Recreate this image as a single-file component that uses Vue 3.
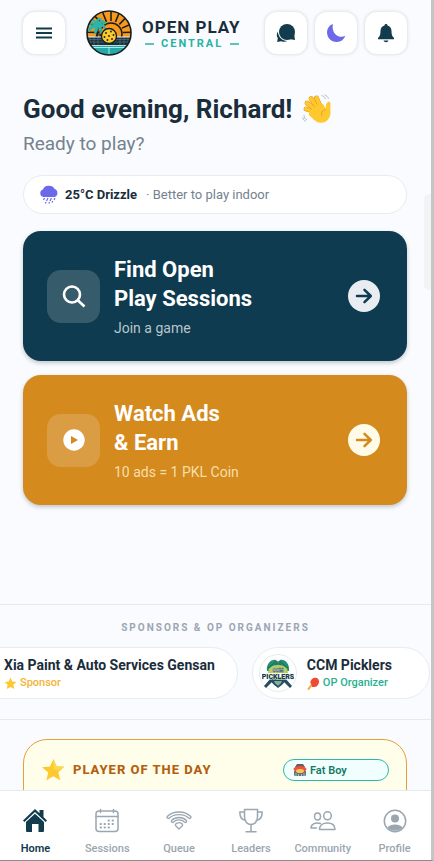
<script setup>
import { ref } from 'vue'

const rays = [-90, -68, -46, -24, -2, -112, -134, -156, -178]

const fingers = ['M17 19L4 15', 'M17 18L5 9', 'M18 17L9 4.5', 'M20 16L14.5 4']

const cards = [
  { id: 'find', lines: ['Find Open', 'Play Sessions'], note: 'Join a game' },
  { id: 'ads', lines: ['Watch Ads', '& Earn'], note: '10 ads = 1 PKL Coin' },
]

const tabs = ['Home', 'Sessions', 'Queue', 'Leaders', 'Community', 'Profile']
const active = ref('Home')
</script>

<template>
  <div class="app">
    <main class="content">
      <header class="header">
        <button class="icon-btn" aria-label="Menu">
          <svg width="18" height="14" viewBox="0 0 18 14" fill="none" stroke="#123b4e" stroke-width="2.200">
            <path d="M1 2.500h16M1 7h16M1 11.500h16" />
          </svg>
        </button>
        <div class="brand">
          <svg class="brand-logo" width="46" height="46" viewBox="0 0 46 46">
            <defs>
              <clipPath id="disc"><circle cx="23" cy="23" r="22" /></clipPath>
            </defs>
            <g clip-path="url(#disc)">
              <rect width="46" height="46" fill="#f8991d" />
              <g stroke="#171d20" stroke-width="1.5">
                <line
                  v-for="r in rays"
                  :key="r"
                  x1="37"
                  y1="23"
                  x2="54"
                  y2="23"
                  :transform="`rotate(${r} 25 23)`"
                />
              </g>
              <circle cx="25" cy="24" r="11" fill="#f8991d" stroke="#171d20" stroke-width="1.5" />
              <path d="M10 16c1 4 1 8-1 12h3c1-4 1-8 0-12z" fill="#171d20" />
              <path
                d="M11 16C8 11 4 12 2 16c3-2 5-2 6-1-4 0-6 3-5 7 2-3 4-4 7-5-2 2-2 5-1 7 2-2 3-4 3-7 2 2 3 4 2 7 3-3 2-6 0-8 3 0 4 1 5 4 1-4-1-6-4-6 1-1 3-1 5 0-1-4-5-5-8-1 0-3 2-4 4-4-3-2-6 0-6 3-1-2-3-3-5-2 3 1 4 3 6 6z"
                fill="#2cb5ab"
                stroke="#2cb5ab"
                stroke-width="0.7"
              />
              <rect y="27" width="46" height="8" fill="#183241" />
              <path d="M0 29.5h46M0 32h46M4 27v8M8 27v8M12 27v8M34 27v8M38 27v8M42 27v8" stroke="#66808a" stroke-width="0.5" />
              <path d="M0 27h46" stroke="#e6edf0" stroke-width="1" />
              <rect y="35" width="46" height="11" fill="#25a9a7" />
              <path d="M0 35.5h46M23 37v9M8 37l-4 7M38 37l4 7M6 37.5h34" stroke="#d8f2ef" stroke-width="0.8" fill="none" />
            </g>
            <circle cx="23" cy="26" r="7.5" fill="#fcc92d" stroke="#171d20" stroke-width="1.3" />
            <g fill="#171d20">
              <circle cx="23" cy="26" r="0.9" /><circle cx="20" cy="23" r="0.9" /><circle cx="25" cy="21.5" r="0.9" />
              <circle cx="27.5" cy="25" r="0.9" /><circle cx="26" cy="29" r="0.9" /><circle cx="21.5" cy="30" r="0.9" />
              <circle cx="18.5" cy="27" r="0.9" />
            </g>
            <circle cx="23" cy="23" r="22" fill="none" stroke="#171d20" stroke-width="1.6" />
          </svg>
          <div class="brand-text">
            <span class="brand-name">OPEN PLAY</span>
            <span class="brand-sub"><i class="dash"></i><span>CENTRAL</span><i class="dash"></i></span>
          </div>
        </div>
        <div class="actions">
          <button class="icon-btn" aria-label="Messages">
            <svg width="20" height="20" viewBox="0 0 20 20" fill="#123b4e">
              <path d="M11 1a8 8 0 1 1 0 16 8 8 0 0 1 0-16z" />
              <path d="M13 16l6 1-1-7z" />
              <path d="M1.800 8.500C.3 11.200.6 13.500 1.800 15L1.200 19l4-.8c2 .9 4.500.8 6-.2-5 0-9-4-9.400-9.500z" />
            </svg>
          </button>
          <button class="icon-btn" aria-label="Dark mode">
            <svg width="20" height="20" viewBox="0 0 20 20" fill="#6b68ea">
              <path d="M7 1C2.500 2.500.6 6.500 1.200 11c.8 5 5 8.200 9.800 8 4-.2 7-2.500 8.300-6.200-3 1.400-7 1.200-9.700-1.400C6.800 8.700 6 4.500 7 1z" />
            </svg>
          </button>
          <button class="icon-btn" aria-label="Notifications">
            <svg width="18" height="20" viewBox="0 0 18 20" fill="#123b4e">
              <path d="M9 1c.9 0 1.500.6 1.500 1.400C13 3 14.500 5 14.500 8c0 4 .8 5.500 2.500 7v1.200H1V15c1.700-1.500 2.500-3 2.500-7 0-3 1.500-5 4-5.600C7.500 1.600 8.100 1 9 1z" />
              <path d="M6.500 17.500h5c-.3 1-1.300 1.700-2.500 1.700s-2.200-.7-2.500-1.700z" />
            </svg>
          </button>
        </div>
      </header>

      <section class="home">
        <h1 class="greeting">
          Good evening, Richard!
          <svg width="30" height="30" viewBox="0 0 30 30">
            <g v-for="f in fingers" :key="f" fill="none" stroke-linecap="round">
              <path :d="f" stroke="#e89a1c" stroke-width="4.800" />
              <path :d="f" stroke="#fdc92e" stroke-width="3.800" />
            </g>
            <path
              d="M7 18l8-7 6-1 3 5c-.5-3 0-6 2-7 1.500-.5 2.800.5 2.500 2-.8 4 1 8-.5 12-1.500 5-6 7.500-11 6.500-3-.6-5.500-3-10-7.500z"
              fill="#fdc92e"
            />
            <path d="M20 22c-1.500-3 .5-5.500 4-6.500" stroke="#e89a1c" fill="none" stroke-width="0.9" />
            <path d="M19.500 1.500c2 .5 3 1.500 4 3.500M22.500 .8c2 .7 3.300 2 4 4M2 21c0 2 1 4 3 5M.8 23.500c.5 2 1.500 3.300 3 4" stroke="#a9b4bc" fill="none" stroke-width="0.9" />
          </svg>
        </h1>
        <p class="ready">Ready to play?</p>

        <div class="weather">
          <svg width="20" height="20" viewBox="0 0 20 20">
            <path d="M4.500 12A3.800 3.800 0 0 1 4 4.600 6 5 0 0 1 15.500 4 4.200 4.200 0 0 1 15.500 12z" fill="#6b68ea" />
            <path d="M5.500 13l-1 2M9 13l-1.500 3M12.500 13l-1.500 3M16 13l-1 2M7 17l-.7 1.500M10.500 17l-.7 1.500M13.700 16l-.7 1.500" stroke="#6b68ea" stroke-width="1.200" />
          </svg>
          <strong>25°C Drizzle</strong>
          <span>· Better to play indoor</span>
        </div>

        <button v-for="card in cards" :key="card.id" class="card" :class="card.id">
          <span class="card-icon">
            <svg v-if="card.id === 'find'" width="24" height="24" viewBox="0 0 24 24" fill="none" stroke="#fff" stroke-width="2.600">
              <circle cx="10" cy="10.500" r="8" />
              <path d="M16 16.500l6.500 6" />
            </svg>
            <svg v-else width="24" height="24" viewBox="0 0 24 24">
              <circle cx="12" cy="12" r="10.700" fill="#fff" />
              <path d="M9 8v8l7-4z" fill="#d48a1d" />
            </svg>
          </span>
          <span class="card-text">
            <span class="card-title">{{ card.lines[0] }}<br />{{ card.lines[1] }}</span>
            <span class="card-note">{{ card.note }}</span>
          </span>
          <span class="card-arrow">
            <svg width="18" height="18" viewBox="0 0 18 18" fill="none" stroke="currentColor" stroke-width="2.500" stroke-linecap="round" stroke-linejoin="round">
              <path d="M2 9h13.500M9.500 2.800L15.800 9l-6.300 6.200" />
            </svg>
          </span>
        </button>
      </section>

      <section class="sponsors">
        <h2 class="sponsors-title">SPONSORS &amp; OP ORGANIZERS</h2>
        <div class="track">
          <article class="pill">
            <span class="avatar"></span>
            <div>
              <p class="pill-name">Xia Paint &amp; Auto Services Gensan</p>
              <p class="pill-role sponsor">
                <svg width="13" height="13" viewBox="0 0 24 24">
                  <path d="M12 1l3.300 7.200 7.700.8-5.700 5.300 1.600 7.900L12 18.300l-6.900 3.900 1.600-7.900L1 9l7.700-.8z" fill="#fdc92e" />
                </svg>
                Sponsor
              </p>
            </div>
          </article>
          <article class="pill">
            <span class="avatar">
              <svg width="32" height="32" viewBox="0 0 32 32">
                <path d="M5 14C4 7 9 2 14 3l2 3 2-3c5-1 10 4 9 11z" fill="#228f70" />
                <path d="M6 11l9-7M9 13l8-9M26 11l-9-7M23 13l-8-9" stroke="#194d54" stroke-width="0.6" />
                <path d="M6 16c0-5 4-8 10-8s10 3 10 8z" fill="#b9cd65" />
                <path d="M2 29l7-8 3 2-8 8zM30 29l-7-8-3 2 8 8z" fill="#244b61" />
                <path d="M8 20h16c0 5-4 8-8 11-4-3-8-6-8-11z" fill="#244b61" />
                <path d="M12 24h8c-1 3-2 3-4 5-2-2-3-2-4-5z" fill="#7cb28c" />
                <text x="16" y="15" class="ccm-top">CCM</text>
                <text x="16" y="22" class="ccm-main">PICKLERS</text>
              </svg>
            </span>
            <div>
              <p class="pill-name">CCM Picklers</p>
              <p class="pill-role organizer">
                <svg width="13" height="13" viewBox="0 0 24 24">
                  <path d="M3 22l6-8" stroke="#f6b04b" stroke-width="4" stroke-linecap="round" />
                  <path d="M6 10C7 3 13 0 18 2s6 9 1 14c-3 3-8 3-10 2 0-3-1-5-3-8z" fill="#ee4b32" />
                </svg>
                OP Organizer
              </p>
            </div>
          </article>
        </div>
      </section>

      <section class="player">
        <svg width="24" height="24" viewBox="0 0 24 24">
          <path d="M12.500 1l3 7.300 7.800.5-5.900 5.400 1.800 8-6.900-4-6.900 4 1.800-7.700L1 9.300l8-.8z" fill="#fdc92e" />
          <path d="M12.500 1l3 7.300 7.800.5-6 3.700-4.800-1.500z" fill="#fdd84d" />
        </svg>
        <h2 class="player-title">PLAYER OF THE DAY</h2>
        <span class="badge">
          <svg width="14" height="14" viewBox="0 0 14 14">
            <path d="M2 4l2-3h6l2 3z" fill="#596269" />
            <rect x="1" y="7" width="12" height="6" rx="1.500" fill="#687078" />
            <ellipse cx="7" cy="6" rx="6.500" ry="3" fill="#f0503c" />
            <ellipse cx="7" cy="8" rx="4" ry="2" fill="#f2ca55" />
            <path d="M3 10v3M5.500 11v2.500M8.500 11v2.500M11 10v3" stroke="#d6dbdd" stroke-width="0.700" />
          </svg>
          Fat Boy
        </span>
      </section>
    </main>

    <nav class="tabbar">
      <button v-for="tab in tabs" :key="tab" class="tab" :class="{ active: tab === active }" @click="active = tab">
        <svg width="26" height="26" viewBox="0 0 26 26" fill="none" stroke="currentColor" stroke-width="1.500" stroke-linejoin="round" stroke-linecap="round">
          <g v-if="tab === 'Home'" stroke="none" fill="currentColor">
            <path d="M13 1L1 12.500l1.400 1.400L13 4l10.600 9.900 1.400-1.400-3.500-3.400V2h-4v3.300z" />
            <path d="M4 14l9-8.200 9 8.200v8.500c0 1-.5 1.500-1.500 1.500h-4v-8h-6.500v8H5.500C4.500 24 4 23.500 4 22.500z" />
          </g>
          <g v-else-if="tab === 'Sessions'">
            <rect x="2" y="3" width="22" height="20.500" rx="3" />
            <path d="M2 8.500h22M6.500 1.500v3M19.500 1.500v3" />
            <path d="M14.500 12.500h.5M18.500 12.500h.5M6.500 16h.5M10.500 16h.5M14.500 16h.5M18.500 16h.5M6.500 19.500h.5M10.500 19.500h.5M14.500 19.500h.5" stroke-width="1.900" />
          </g>
          <g v-else-if="tab === 'Queue'" stroke-width="1.300">
            <path d="M1.200 8.500c6-6 17.600-6 23.600 0 .7 1-.8 2.500-1.800 1.700-5-4.800-15-4.800-20 0-1 .8-2.500-.7-1.800-1.700z" />
            <path d="M5.500 12.500c4-4 11-4 15 0 .7 1-.8 2.500-1.800 1.700-3-3-8.400-3-11.400 0-1 .8-2.500-.7-1.800-1.700z" />
            <path d="M9.500 16.300c2-2.300 5-2.300 7 0 .7 1 0 1.400-.7 2L13 21l-2.800-2.700c-.7-.6-1.400-1-.7-2z" />
          </g>
          <g v-else-if="tab === 'Leaders'">
            <path d="M6.500 1.500h13V9c0 4.500-3 7.500-6.500 7.500S6.500 13.500 6.500 9zM6.500 4H1.800c0 5 2 8 6 8.500M19.500 4h4.700c0 5-2 8-6 8.500M13 16.500v7M8 23.800h10" />
          </g>
          <g v-else-if="tab === 'Community'">
            <ellipse cx="7.500" cy="8.500" rx="3" ry="3.500" />
            <ellipse cx="17.500" cy="7.800" rx="3.800" ry="4" />
            <path d="M9.500 21.500h15.500c0-4-3-6.500-7.700-6.500s-7.800 2.500-7.800 6.500zM10.500 15.500C6 14 1 16 1 20h5.500" />
          </g>
          <g v-else>
            <circle cx="13" cy="13" r="10.700" />
            <circle cx="13" cy="10.500" r="4" fill="currentColor" stroke="none" />
            <path d="M5.500 19.800c3-4.300 12-4.300 15 0-4 4-11 4-15 0z" fill="currentColor" stroke="none" />
          </g>
        </svg>
        <span>{{ tab }}</span>
      </button>
    </nav>
    <span class="edge-handle"></span>
  </div>
</template>

<style>
body {
  margin: 0;
  background: #fafbfe;
}
</style>

<style scoped>
.app {
  position: relative;
  display: flex;
  flex-direction: column;
  height: 100vh;
  box-sizing: border-box;
  overflow: hidden;
  border-right: 3px solid #c5c5c5;
  border-bottom: 1px solid #8c8c8c;
  background: #fafbfe;
  color: #1a2d3b;
  font-family: Roboto, "Liberation Sans", sans-serif;
}
h1,
h2,
p {
  margin: 0;
}
svg {
  display: block;
  flex-shrink: 0;
}
button {
  font-family: inherit;
  cursor: pointer;
}
.content {
  flex: 1;
  min-height: 0;
  overflow: hidden;
}

.header {
  display: flex;
  align-items: center;
  padding: 11px 23px 0 22px;
}
.icon-btn {
  display: flex;
  align-items: center;
  justify-content: center;
  width: 44px;
  height: 44px;
  padding: 0;
  border: 1px solid #e9edf2;
  border-radius: 13px;
  background: #fff;
  box-shadow: 0 0 3px rgba(30, 50, 80, 0.12);
}
.brand {
  display: flex;
  align-items: center;
  gap: 10px;
  margin-left: 20px;
}
.brand-logo {
  margin: -1px 0;
}
.brand-text {
  display: flex;
  flex-direction: column;
  padding-top: 2px;
}
.brand-name {
  font-size: 17px;
  line-height: 20px;
  font-weight: 700;
  letter-spacing: 1px;
  white-space: nowrap;
}
.brand-sub {
  display: flex;
  align-items: center;
  gap: 7px;
  padding-left: 3px;
  color: #27b2a4;
  font-size: 11px;
  line-height: 14px;
  font-weight: 700;
  letter-spacing: 2px;
}
.dash {
  width: 9px;
  height: 2px;
  background: #5cc5b9;
}
.actions {
  display: flex;
  gap: 6px;
  margin-left: auto;
}

.home {
  padding: 38px 24px 0 23px;
}
.greeting {
  display: flex;
  align-items: center;
  gap: 10px;
  font-size: 26px;
  line-height: 32px;
  font-weight: 700;
}
.ready {
  margin-top: 5px;
  color: #74828f;
  font-size: 19px;
  line-height: 28px;
}
.weather {
  display: flex;
  align-items: center;
  height: 39px;
  box-sizing: border-box;
  margin: 17px 0;
  padding: 0 15px;
  border: 1px solid #e8ebf0;
  border-radius: 20px;
  background: #fff;
  font-size: 13px;
}
.weather strong {
  margin: 0 9px 0 6px;
}
.weather span {
  color: #74828f;
}

.card {
  display: flex;
  align-items: center;
  gap: 14px;
  width: 100%;
  height: 130px;
  margin-bottom: 14px;
  padding: 0 27px 0 24px;
  border: 0;
  border-radius: 18px;
  color: #fff;
  text-align: left;
  box-shadow: 0 2px 4px rgba(20, 40, 60, 0.25);
}
.find {
  background: #0e3b4f;
}
.ads {
  background: #d48a1d;
}
.card-icon {
  display: flex;
  align-items: center;
  justify-content: center;
  width: 53px;
  height: 53px;
  border-radius: 14px;
  background: rgba(255, 255, 255, 0.17);
}
.card-text {
  flex: 1;
}
.card-title {
  display: block;
  font-size: 22px;
  line-height: 29px;
  font-weight: 700;
}
.card-note {
  display: block;
  margin-top: 5px;
  color: #b9c5cc;
  font-size: 14px;
  line-height: 20px;
}
.ads .card-note {
  color: #f7dfa9;
}
.card-arrow {
  display: flex;
  align-items: center;
  justify-content: center;
  width: 32px;
  height: 32px;
  border-radius: 50%;
  background: #e9edf1;
  color: #0e3b4f;
}
.ads .card-arrow {
  background: #fffbe8;
  color: #d48a1d;
}

.sponsors {
  margin-top: 99px;
  padding: 15px 0 20px;
  border-top: 1px solid #e6eaf0;
  border-bottom: 1px solid #e6eaf0;
}
.sponsors-title {
  color: #9aa6b3;
  font-size: 10px;
  line-height: 16px;
  font-weight: 700;
  letter-spacing: 2px;
  text-align: center;
}
.track {
  display: flex;
  gap: 14px;
  margin: 11px 0 0 -51px;
}
.pill {
  display: flex;
  flex-shrink: 0;
  align-items: center;
  gap: 10px;
  height: 52px;
  min-width: 178px;
  box-sizing: border-box;
  padding: 0 22px 0 6px;
  border: 1px solid #e8ecf1;
  border-radius: 26px;
  background: #fff;
}
.avatar {
  display: flex;
  align-items: center;
  justify-content: center;
  width: 36px;
  height: 36px;
  border: 1px solid #e6ebf0;
  border-radius: 50%;
}
.ccm-top,
.ccm-main {
  font-family: Roboto, sans-serif;
  font-weight: 900;
  text-anchor: middle;
}
.ccm-top {
  fill: #fff;
  stroke: #244b61;
  stroke-width: 0.4px;
  font-size: 5px;
}
.ccm-main {
  fill: #183a50;
  stroke: #e9f0de;
  stroke-width: 1px;
  paint-order: stroke;
  font-size: 7px;
}
.pill-name {
  font-size: 14px;
  line-height: 20px;
  font-weight: 700;
  white-space: nowrap;
}
.pill-role {
  display: flex;
  align-items: center;
  gap: 3px;
  font-size: 11px;
  line-height: 16px;
  font-weight: 500;
}
.sponsor {
  color: #f2b434;
}
.organizer {
  color: #27b08f;
}

.player {
  display: flex;
  align-items: center;
  height: 160px;
  box-sizing: border-box;
  margin: 19px 24px 0 23px;
  padding: 19px 17px 117px;
  border: 1px solid #e3a137;
  border-radius: 24px;
  background: #fffeea;
}
.player-title {
  margin-left: 8px;
  color: #b45f10;
  font-size: 13px;
  line-height: 22px;
  font-weight: 800;
  letter-spacing: 1px;
}
.badge {
  display: flex;
  align-items: center;
  gap: 3px;
  width: 106px;
  height: 22px;
  box-sizing: border-box;
  margin-left: auto;
  padding: 0 9px;
  border: 1px solid #2cb9ac;
  border-radius: 11px;
  background: #f0fffd;
  color: #137a68;
  font-size: 11px;
  font-weight: 600;
}

.tabbar {
  display: flex;
  height: 70px;
  box-sizing: border-box;
  border-top: 1px solid #e3e9f0;
  background: #fff;
}
.tab {
  flex: 1 1 0;
  display: flex;
  flex-direction: column;
  align-items: center;
  gap: 8px;
  min-width: 0;
  padding: 17px 1px 0 0;
  border: 0;
  background: none;
  color: #9aa6b0;
  font-size: 11px;
  line-height: 14px;
  font-weight: 500;
}
.tab.active {
  color: #123b4e;
  font-weight: 600;
}

.edge-handle {
  position: absolute;
  top: 194px;
  right: 0;
  width: 7px;
  height: 96px;
  border-radius: 5px 0 0 5px;
  background: #f2f3f5;
}
</style>
